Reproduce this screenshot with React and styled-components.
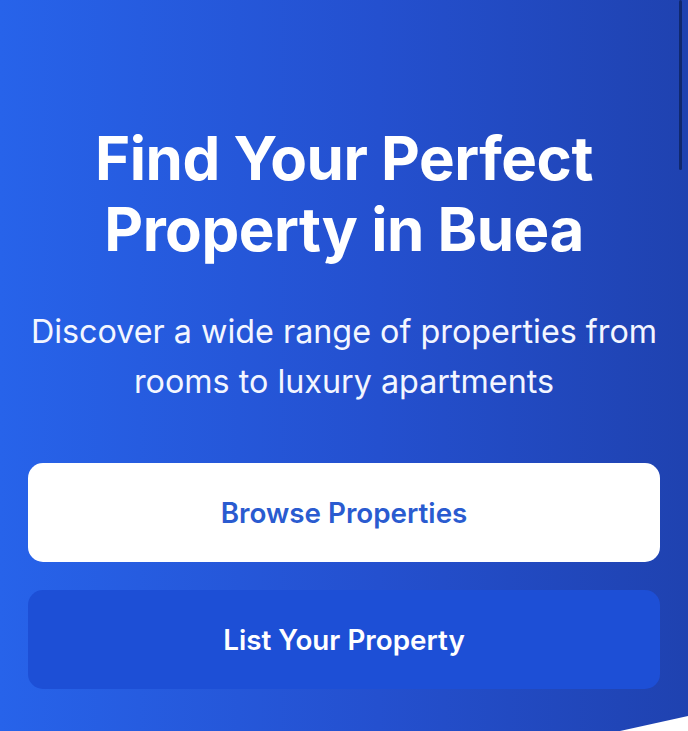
import React from "react";
import styled, { createGlobalStyle } from "styled-components";

const Global = createGlobalStyle`
  html, body { margin: 0; padding: 0; }
  body { font-family: Inter, "Noto Sans", sans-serif; background: #fff; }
`;

const Hero = styled.section`
  position: relative;
  height: 731px;
  overflow: hidden;
  background: linear-gradient(90deg, #2763ea 0%, #2450cf 55%, #1f42b0 100%);
  padding: 123px 28px 0;
  box-sizing: border-box;
  display: flex;
  flex-direction: column;
  align-items: center;
  color: #fff;
`;

const Title = styled.h1`
  margin: 0;
  font-size: 60px;
  line-height: 71px;
  font-weight: 700;
  letter-spacing: -0.5px;
  text-align: center;
`;

const Lead = styled.p`
  margin: 42px 0 0;
  font-size: 32.3px;
  line-height: 50px;
  font-weight: 400;
  text-align: center;
  white-space: nowrap;
  color: #f3f6ff;
`;

const Actions = styled.div`
  width: 100%;
  margin-top: 56px;
  display: flex;
  flex-direction: column;
  gap: 28px;
`;

const Button = styled.button`
  height: 99px;
  border: none;
  border-radius: 15px;
  font-family: inherit;
  font-size: 27.8px;
  font-weight: 600;
  background: ${(p) => (p.$primary ? "#ffffff" : "#1d4fd6")};
  color: ${(p) => (p.$primary ? "#2a5bd0" : "#ffffff")};
`;

const ScrollBar = styled.div`
  position: absolute;
  top: 0;
  right: 6px;
  width: 3px;
  height: 170px;
  border-radius: 2px;
  background: #10286e;
`;

const Slant = styled.svg`
  position: absolute;
  right: 0;
  bottom: 0;
`;

export default function App() {
  return (
    <>
      <Global />
      <Hero>
        <ScrollBar />
        <Title>
          Find Your Perfect
          <br />
          Property in Buea
        </Title>
        <Lead>
          Discover a wide range of properties from
          <br />
          rooms to luxury apartments
        </Lead>
        <Actions>
          <Button $primary>Browse Properties</Button>
          <Button>List Your Property</Button>
        </Actions>
        <Slant width="68" height="20" viewBox="0 0 68 20">
          <polygon points="0,20 68,5 68,20" fill="#ffffff" />
        </Slant>
      </Hero>
    </>
  );
}
